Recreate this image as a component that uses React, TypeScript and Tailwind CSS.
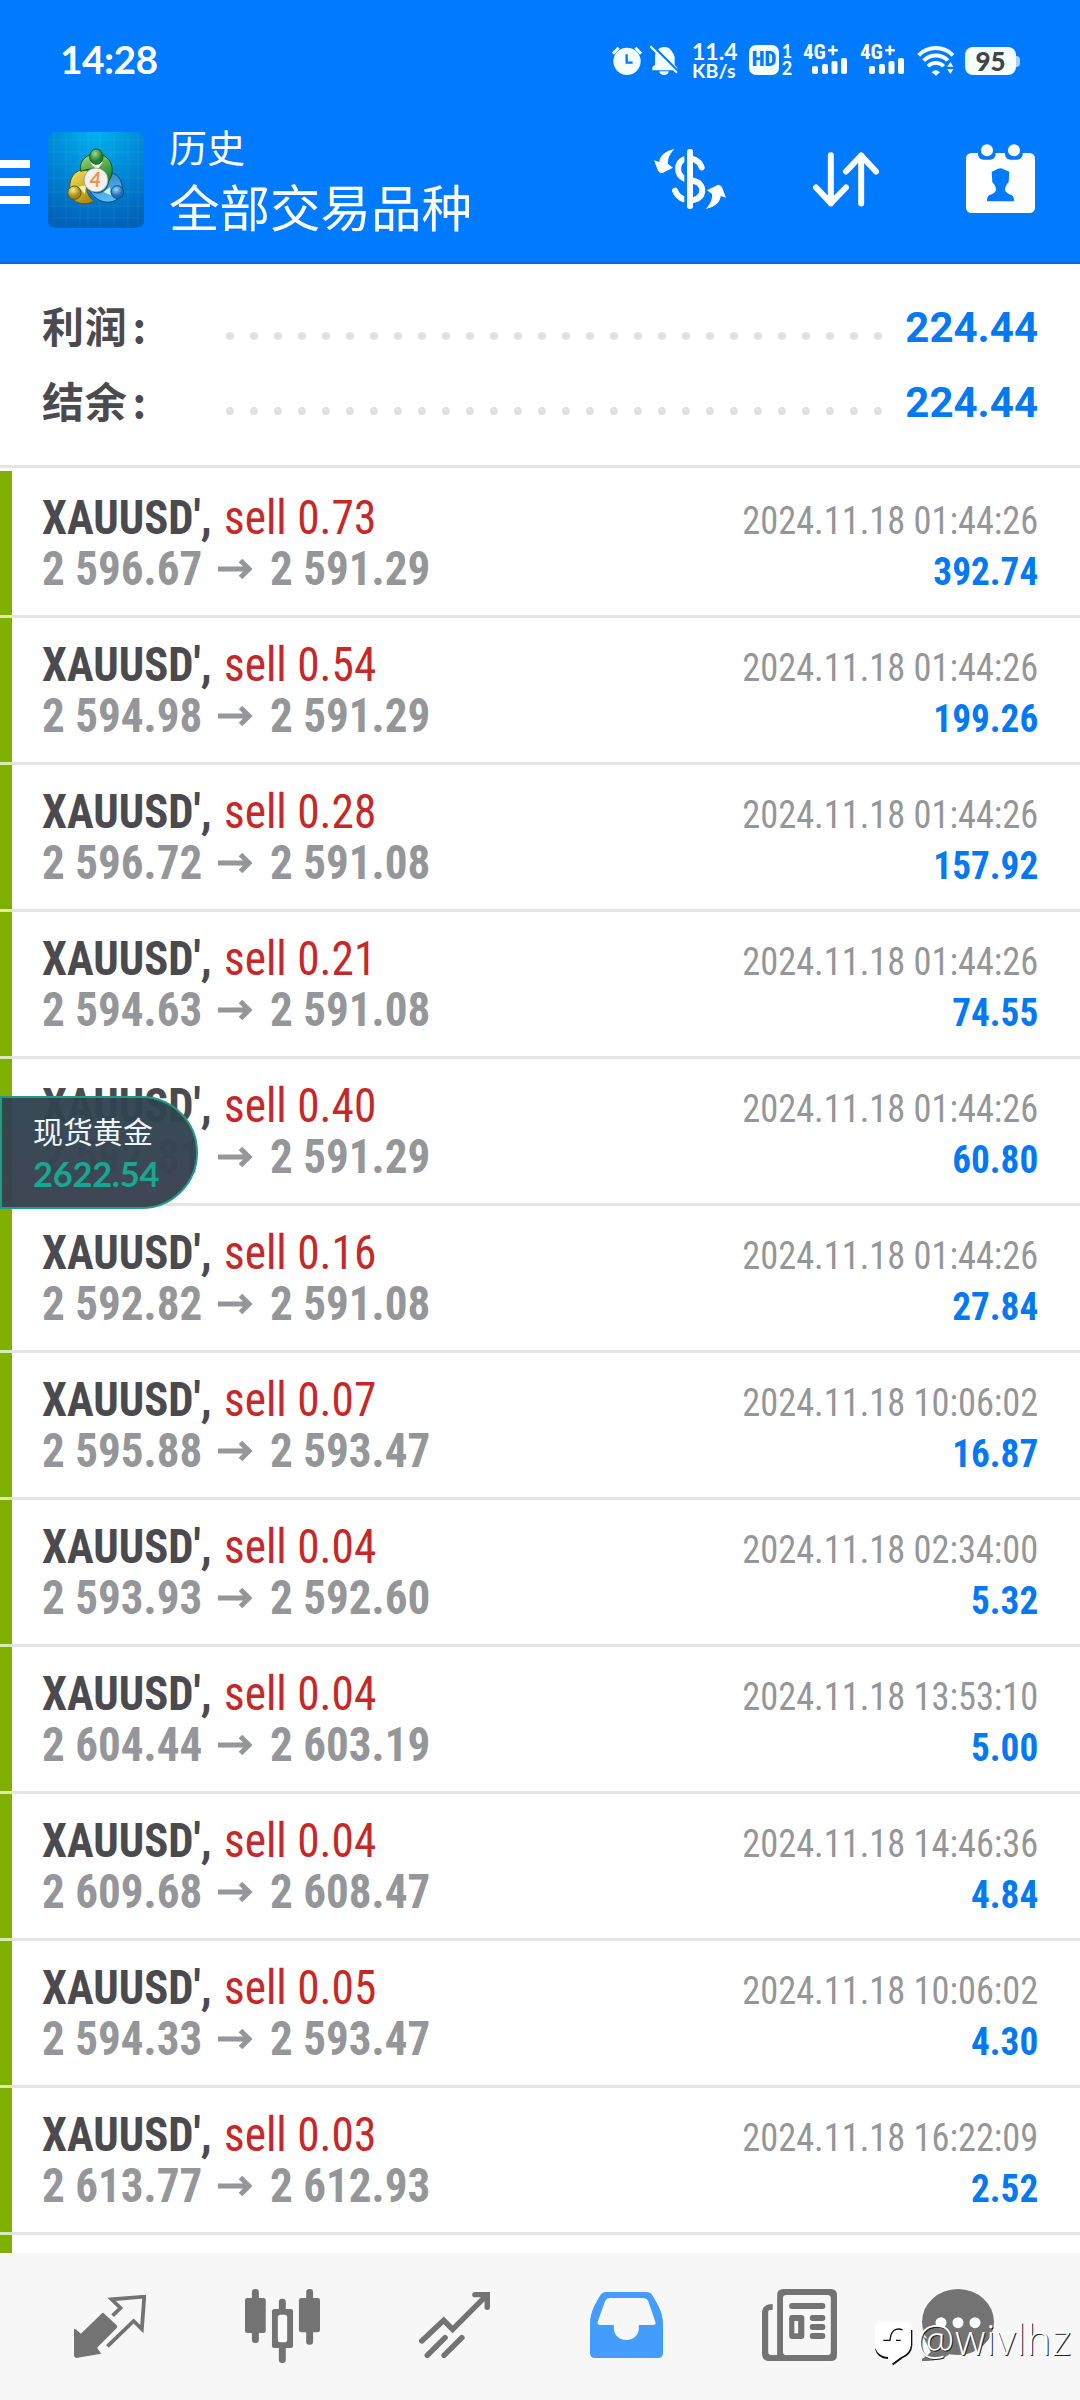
type Deal = { volume: string; open: string; close: string; time: string; profit: string }

const DEALS: Deal[] = [
  { volume: '0.73', open: '2 596.67', close: '2 591.29', time: '2024.11.18 01:44:26', profit: '392.74' },
  { volume: '0.54', open: '2 594.98', close: '2 591.29', time: '2024.11.18 01:44:26', profit: '199.26' },
  { volume: '0.28', open: '2 596.72', close: '2 591.08', time: '2024.11.18 01:44:26', profit: '157.92' },
  { volume: '0.21', open: '2 594.63', close: '2 591.08', time: '2024.11.18 01:44:26', profit: '74.55' },
  { volume: '0.40', open: '2 592.81', close: '2 591.29', time: '2024.11.18 01:44:26', profit: '60.80' },
  { volume: '0.16', open: '2 592.82', close: '2 591.08', time: '2024.11.18 01:44:26', profit: '27.84' },
  { volume: '0.07', open: '2 595.88', close: '2 593.47', time: '2024.11.18 10:06:02', profit: '16.87' },
  { volume: '0.04', open: '2 593.93', close: '2 592.60', time: '2024.11.18 02:34:00', profit: '5.32' },
  { volume: '0.04', open: '2 604.44', close: '2 603.19', time: '2024.11.18 13:53:10', profit: '5.00' },
  { volume: '0.04', open: '2 609.68', close: '2 608.47', time: '2024.11.18 14:46:36', profit: '4.84' },
  { volume: '0.05', open: '2 594.33', close: '2 593.47', time: '2024.11.18 10:06:02', profit: '4.30' },
  { volume: '0.03', open: '2 613.77', close: '2 612.93', time: '2024.11.18 16:22:09', profit: '2.52' },
]

const SUMMARY = [
  { label: '利润', value: '224.44' },
  { label: '结余', value: '224.44' },
]

function Signal({ className }: { className: string }) {
  return (
    <div className={`relative h-[31px] w-[45px] ${className}`}>
      <span className="absolute left-0 top-0 font-['Roboto_Condensed',sans-serif] text-[21px] font-bold leading-[16px]">4G</span>
      <svg className="absolute inset-0" width="45" height="31" viewBox="0 0 45 31" fill="#fff">
        <path d="M25 5h3.6V1.4h2.6V5h3.6v2.6h-3.6v3.6h-2.6V7.6H25z" />
        <rect x="9" y="22" width="6" height="8" rx="2" />
        <rect x="19" y="20" width="6" height="10" rx="2" />
        <rect x="28.500" y="17" width="6" height="13" rx="2" />
        <rect x="38" y="14" width="6" height="16" rx="2" />
      </svg>
    </div>
  )
}

function StatusBar() {
  return (
    <div className="flex h-24 items-start pl-[60px] pt-[44px] text-white">
      <span className="mt-[-4px] w-[552px] font-['Lato',sans-serif] text-[39px] font-bold leading-[39px] tracking-[-0.6px]">14:28</span>
      <svg width="30" height="32" viewBox="66 72 90 96" fill="#f4ffff">
        <circle cx="111" cy="124" r="41" />
        <path d="M69 101l17-18M153 101l-17-18" stroke="#f4ffff" strokeWidth="9" />
        <path d="M110 103v25h18" fill="none" stroke="#007aff" strokeWidth="7" />
      </svg>
      <svg className="ml-[8px]" width="28" height="32" viewBox="182 72 84 96" fill="#f4ffff">
        <path d="M189 151v-9l8-8v-26a28 30 0 0 1 54-8q4 4 5 12v22l8 10v7zM210 154h28a14 11 0 0 1-28 0z" />
        <path d="M186 74l84 84" stroke="#007aff" strokeWidth="8" />
        <path d="M183 79l80 79" stroke="#f4ffff" strokeWidth="6" />
      </svg>
      <div className="ml-[14px] mt-[-3px] w-[45px] whitespace-nowrap font-['Lato',sans-serif] font-bold">
        <div className="text-[23px] leading-[21px]">11.4</div>
        <div className="text-[19.500px] leading-[18px] tracking-[0.2px]">KB/s</div>
      </div>
      <div className="ml-[12px] mt-[1px] flex h-[30px] w-[30px] items-center justify-center rounded-[7px] bg-[#f4ffff] font-['Roboto_Condensed',sans-serif] text-[21px] font-black text-[#007aff]">HD</div>
      <div className="ml-[2px] mt-[-1px] w-[12px] text-center font-['Lato',sans-serif] text-[18px] font-bold leading-[17px]">
        <div>1</div>
        <div>2</div>
      </div>
      <Signal className="ml-[10px]" />
      <Signal className="ml-[12px]" />
      <svg className="ml-[12px]" width="38" height="33" viewBox="982 72 114 99" fill="none" stroke="#f4ffff">
        <path d="M987 106a72 72 0 0 1 103 0" strokeWidth="12" />
        <path d="M1002 122a50 50 0 0 1 73 0" strokeWidth="12" />
        <path d="M1015 139a32 32 0 0 1 47 0" strokeWidth="11" />
        <path d="M1026 157q12-12 25 0l-12 10z" fill="#f4ffff" stroke="none" />
        <path d="M1068 170v-44l14-10 14 10v44z" fill="#007aff" stroke="none" />
        <path d="M1073 140l9-14 9 14zM1073 148l9 14 9-14z" fill="#f4ffff" stroke="none" />
      </svg>
      <div className="ml-[10px] mt-[3px] flex items-center">
        <div className="flex h-[28px] w-[51px] items-center justify-center rounded-[8px] bg-[#f4ffff] font-['Lato',sans-serif] text-[26px] font-black leading-none text-[#444]">95</div>
        <div className="h-[11px] w-[4px] rounded-r bg-[#a5d2ff]" />
      </div>
    </div>
  )
}

function AppLogo() {
  return (
    <svg className="ml-[18px] mt-[36px]" width="96" height="96" viewBox="24 24 288 288">
      <defs>
        <radialGradient id="bg" cx=".5" cy="0" r="1">
          <stop offset="0" stopColor="#00b2ee" />
          <stop offset=".55" stopColor="#0084d4" />
          <stop offset="1" stopColor="#0062b8" />
        </radialGradient>
        <linearGradient id="green" x2=".4" y2="1">
          <stop stopColor="#a4dc74" />
          <stop offset="1" stopColor="#1f8434" />
        </linearGradient>
        <linearGradient id="yellow" x2=".6" y2="1">
          <stop stopColor="#f7ea62" />
          <stop offset="1" stopColor="#b08a16" />
        </linearGradient>
        <linearGradient id="blue" x2=".3" y2="1">
          <stop stopColor="#2f7fc0" />
          <stop offset="1" stopColor="#58bbf0" />
        </linearGradient>
        <radialGradient id="greenHead" cx=".4" cy=".3"><stop stopColor="#9fdc84" /><stop offset="1" stopColor="#237e33" /></radialGradient>
        <radialGradient id="yellowHead" cx=".4" cy=".3"><stop stopColor="#f8ef90" /><stop offset="1" stopColor="#a98616" /></radialGradient>
        <radialGradient id="blueHead" cx=".4" cy=".3"><stop stopColor="#9ad8fb" /><stop offset="1" stopColor="#1d6cb4" /></radialGradient>
      </defs>
      <rect x="24" y="24" width="288" height="288" rx="22" fill="url(#bg)" />
      <path d="M42 24v288M78 24v288M120 24v288M144 24v288M180 24v288M222 24v288M264 24v288M294 24v288M24 48h288M24 84h288M24 120h288M24 162h288M24 204h288M24 246h288M24 282h288" stroke="#fff" strokeOpacity=".1" strokeWidth="2" />
      <g strokeWidth="3">
        <path d="M91 208C84 170 98 144 124 138C145 134 160 150 148 172C134 190 140 214 162 232C132 248 96 238 91 208Z" fill="url(#yellow)" stroke="#5d560d" />
        <path d="M147 196C170 216 198 206 204 180C208 160 212 152 220 148C246 160 254 192 240 216C220 246 168 240 147 196Z" fill="url(#blue)" stroke="#0d4678" />
        <path d="M122 142C116 108 140 90 170 90C204 90 224 122 214 156C210 168 202 178 200 180C204 152 190 136 168 134C150 134 136 138 122 142Z" fill="url(#green)" stroke="#135326" />
        <path d="M150 116l38-2-16 24z" fill="#f2f7ef" stroke="none" />
        <path d="M116 188l22-4-4 26z" fill="#f5f1b8" stroke="none" />
        <path d="M190 204l20-14 4 24z" fill="#d8efff" stroke="none" />
        <ellipse cx="169" cy="98" rx="20" ry="23" fill="url(#greenHead)" stroke="#155a28" />
        <circle cx="103" cy="206" r="20" fill="url(#yellowHead)" stroke="#5f560f" />
        <circle cx="232" cy="204" r="19" fill="url(#blueHead)" stroke="#124d85" />
      </g>
      <circle cx="168" cy="168" r="36" fill="#f2f0f0" stroke="#8a8466" strokeWidth="2" />
      <text x="166" y="188" textAnchor="middle" fontFamily="Lato, sans-serif" fontWeight="700" fontStyle="italic" fontSize="60" fill="#ee9448">4</text>
    </svg>
  )
}

function ExchangeIcon() {
  const curl = 'M223 120C206 138 203 152 204 165L219 176L186 193Q178 192 174 185L162 154L178 159Q180 130 223 120Z'
  return (
    <svg width="72" height="60" viewBox="162 120 216 180" fill="#fff">
      <path d={curl} />
      <path d={curl} transform="rotate(180 270 210)" />
      <path d="M305 175C298 154 274 143 254 150C228 160 228 198 254 209C268 214 284 213 296 222C314 238 308 262 290 270C266 280 236 272 225 245" fill="none" stroke="#fff" strokeWidth="18" strokeLinecap="round" />
      <rect x="253" y="120" width="12" height="180" fill="#007aff" />
      <rect x="261" y="120" width="18" height="180" rx="8" />
    </svg>
  )
}

function SortIcon() {
  return (
    <svg width="66" height="55" viewBox="639 128 198 164" fill="none" stroke="#fff" strokeWidth="18" strokeLinecap="round" strokeLinejoin="round">
      <path d="M692.500 137V282M648 234L692.500 281L738 234M783.500 282V138M738 186L783.500 138L828 186" />
    </svg>
  )
}

function CalendarIcon() {
  return (
    <svg width="69" height="69" viewBox="1098 101 207 207" fill="#fff">
      <rect x="1098" y="128" width="207" height="180" rx="16" />
      <path d="M1134 122h53v12q-4 14-16 14h-21q-13 0-16-14zM1215 122h53v12q-4 14-16 14h-21q-13 0-16-14z" fill="#007aff" />
      <circle cx="1161" cy="120" r="18" />
      <circle cx="1242" cy="120" r="18" />
      <path d="M1175 184l12-5q15-10 28 0l13 5-2 32q-11 10-11 24 4 10 20 14 7 4 7 19h-81q0-15 7-19 17-4 20-14 0-14-11-24z" fill="#007aff" />
    </svg>
  )
}

function Header() {
  return (
    <div className="flex h-[168px] items-start border-b-2 border-[#1268c8] text-white">
      <div className="mt-[64px] flex w-[30px] flex-col gap-[10px]">
        <div className="h-2 bg-white" />
        <div className="h-2 bg-white" />
        <div className="h-2 bg-white" />
      </div>
      <AppLogo />
      <div className="ml-[25px] mt-[29px] w-[443px] font-['Roboto','Noto_Sans_CJK_SC',sans-serif]">
        <div className="text-[38px] leading-[49px]">历史</div>
        <div className="text-[50.500px] leading-[72px]">全部交易品种</div>
      </div>
      <div className="flex h-[166px] w-[156px] items-center justify-center"><ExchangeIcon /></div>
      <div className="flex h-[166px] w-[156px] items-center justify-center"><SortIcon /></div>
      <div className="flex h-[165px] w-[152px] items-center justify-center"><CalendarIcon /></div>
    </div>
  )
}

function Summary() {
  return (
    <div className="h-[204px] border-b-[3px] border-[#e4e4e4] px-[42px] pt-[26px]">
      {SUMMARY.map(s => (
        <div key={s.label} className="flex h-[75px] font-['Roboto','Noto_Sans_CJK_SC',sans-serif] text-[42px] font-bold leading-[75px]">
          <span className="mt-px w-[184px] tracking-[0.8px] text-[#4a4a4f]">
            {s.label}
            <span className="ml-[5px] font-['Noto_Sans_CJK_SC',sans-serif] leading-none">:</span>
          </span>
          <div className="mt-[42px] flex w-[656px] justify-between">
            {Array.from({ length: 28 }, (_, i) => <i key={i} className="size-[8px] rounded-full bg-[#e2e2e2]" />)}
          </div>
          <span className="flex-1 text-right text-[#0579f2]">{s.value}</span>
        </div>
      ))}
    </div>
  )
}

function DealRow({ deal }: { deal: Deal }) {
  return (
    <div className="flex h-[147px] flex-col font-['Roboto_Condensed',sans-serif]">
      <div className="flex h-36">
        <div className="w-3 bg-[#7fb000]" />
        <div className="flex flex-1 justify-between pl-[30px] pr-[42px] pt-[21px]">
          <div className="text-[48.500px] leading-[51px]">
            <div className="flex">
              <span className="w-[182px] origin-left scale-x-[0.92] whitespace-nowrap font-bold text-[#4a4a4f]">XAUUSD',</span>
              <span className="origin-left scale-x-[0.935] whitespace-nowrap text-[#c62828]">sell {deal.volume}</span>
            </div>
            <div className="flex font-bold text-[#949699]">
              <span className="w-[176px] origin-left scale-x-[0.93] whitespace-nowrap">{deal.open}</span>
              <svg className="mt-[15px]" width="35" height="22" viewBox="0 0 35 22" fill="none" stroke="#949699" strokeWidth="5">
                <path d="M0 11h31M22.500 2.500L31 11l-8.500 8.500" />
              </svg>
              <span className="ml-[17px] origin-left scale-x-[0.93] whitespace-nowrap">{deal.close}</span>
            </div>
          </div>
          <div className="pt-1 text-right text-[39px] leading-[51px]">
            <div className="origin-right scale-x-[0.933] text-[#949699]">{deal.time}</div>
            <div className="origin-right scale-x-[0.955] font-bold text-[#0579f2]">{deal.profit}</div>
          </div>
        </div>
      </div>
      <div className="flex h-[3px]">
        <div className="w-3 bg-[#d9ebb4]" />
        <div className="flex-1 bg-[#e4e4e4]" />
      </div>
    </div>
  )
}

function PriceBadge() {
  return (
    <div className="absolute left-0 top-[1096px] h-[113px] w-[198px] rounded-r-full border-2 border-[#1f9c84] bg-linear-to-b from-[#2e4450]/96 to-[#3a404f]/97 pl-[31px] pt-[15px]">
      <div className="font-['Roboto','Noto_Sans_CJK_SC',sans-serif] text-[30px] leading-[40px] text-[#eef4f6]">现货黄金</div>
      <div className="font-['Lato',sans-serif] text-[34.500px] font-bold leading-[42px] tracking-[-0.3px] text-[#16a890]">2622.54</div>
    </div>
  )
}

function BottomNav() {
  return (
    <div className="flex h-[147px] items-start bg-[#f7f7f7] pl-6 pt-[36px]">
      <div className="flex w-[172px] justify-center">
        <svg className="mt-[6px]" width="72" height="63" viewBox="215 285 209 189" preserveAspectRatio="none" fill="#737373">
          <path d="M299 338Q303 340 306 344L339 376Q342 380 339 384L282 443L294 461L221 474Q215 473 215 466V386L222 389L235 401L294 342Q297 338 299 338Z" />
          <path d="M327 347L350 324L324 298L419 290L412 387L388 363L312 439" fill="none" stroke="#737373" strokeWidth="11" />
        </svg>
      </div>
      <div className="flex w-[172px] justify-center">
        <svg width="75" height="74" viewBox="709 267 217 222" preserveAspectRatio="none" fill="#737373">
          <rect x="709" y="294" width="60" height="105" rx="7" />
          <rect x="729" y="267" width="20" height="162" rx="9" />
          <rect x="865" y="294" width="61" height="103" rx="7" />
          <rect x="886" y="267" width="20" height="167" rx="9" />
          <rect x="807" y="296" width="20" height="50" rx="9" />
          <rect x="807" y="430" width="20" height="59" rx="9" />
          <rect x="787" y="327" width="61" height="117" rx="7" />
          <rect x="804" y="344" width="27" height="83" rx="8" fill="#fafafa" />
        </svg>
      </div>
      <div className="flex w-[172px] justify-center">
        <svg className="mt-[3px]" width="71" height="66" viewBox="1213 276 207 198" preserveAspectRatio="none" fill="none" stroke="#737373" strokeWidth="16" strokeLinecap="round">
          <path d="M1221 423L1285 361L1311 388L1410 286" strokeLinejoin="miter" />
          <path d="M1376 284H1412V322" />
          <path d="M1237 466L1289 413M1286 466L1338 413" />
        </svg>
      </div>
      <div className="flex w-[173px] justify-center">
        <svg className="mt-[3px]" width="73" height="66" viewBox="146 276 211 198" preserveAspectRatio="none" fill="#449cfc">
          <path d="M193 276H309Q320 276 326 286C344 316 357 340 357 372V459Q357 474 342 474H161Q146 474 146 459V372C146 340 160 312 176 286Q182 276 193 276Z" />
          <path d="M204 294H300Q310 294 314 302L335 366Q338 375 328 375H287V386A36 34 0 0 1 215 386V375H176Q166 375 168 366L190 302Q194 294 204 294Z" fill="#f7f7f7" />
        </svg>
      </div>
      <div className="flex w-[173px] justify-center">
        <svg width="75" height="72" viewBox="646 267 218 216" preserveAspectRatio="none" fill="#737373">
          <path d="M677 312V329Q664 328 664 336V456Q664 465 673 465H690V285Q690 267 708 267H846Q864 267 864 285V465Q864 483 846 483H668Q646 483 646 461V336Q648 312 677 312Z" />
          <rect x="707" y="285" width="139" height="180" rx="10" fill="#f7f7f7" />
          <rect x="725" y="309" width="105" height="18" rx="8" />
          <rect x="725" y="345" width="44" height="72" rx="9" />
          <rect x="740" y="363" width="11" height="37" fill="#f7f7f7" />
          <rect x="785" y="345" width="45" height="18" rx="8" />
          <rect x="785" y="372" width="45" height="18" rx="8" />
          <rect x="785" y="399" width="45" height="18" rx="8" />
        </svg>
      </div>
      <div className="flex w-[144px] justify-center">
        <svg width="72" height="72" viewBox="246 57 216 216" fill="#737373">
          <ellipse cx="354" cy="156" rx="108" ry="99" />
          <path d="M250 200l22 46q-10 14-26 20v7q60 2 90-26z" />
          <circle cx="303" cy="158" r="16.500" fill="#fff" />
          <circle cx="354" cy="158" r="16.500" fill="#fff" />
          <circle cx="405" cy="158" r="16.500" fill="#fff" />
        </svg>
      </div>
    </div>
  )
}

function Watermark() {
  return (
    <div className="absolute left-[874px] top-[2318px] flex">
      <svg width="40" height="48" viewBox="102 144 120 144">
        <path d="M214 180V226Q212 252 186 262L158 283" fill="none" stroke="#111" strokeWidth="6" />
        <path d="M108 236Q114 262 144 264" fill="none" stroke="#111" strokeWidth="6" />
        <path d="M128 154H190Q213 154 213 178V224Q210 250 184 260L156 280L150 262Q108 258 105 228V178Q105 154 128 154Z" fill="#fff" />
        <path d="M130 211h20q2-27 18-33 10-3 20 2M168 211h14" fill="none" stroke="#111" strokeWidth="4" />
      </svg>
      <span className="ml-[3px] mt-[-1px] font-['Open_Sans',sans-serif] text-[42px] font-light leading-[44px] tracking-[0.7px] text-white [text-shadow:1px_1px_0_#222]">@wivlhz</span>
    </div>
  )
}

export default function App() {
  return (
    <div className="relative flex h-[2400px] w-[1080px] flex-col overflow-hidden bg-white">
      <div className="shrink-0 bg-[#007aff]">
        <StatusBar />
        <Header />
      </div>
      <Summary />
      <div className="h-[1785px] shrink-0 overflow-hidden pt-[3px]">
        {DEALS.map((d, i) => <DealRow key={i} deal={d} />)}
        <div className="h-[18px] w-3 bg-[#7fb000]" />
      </div>
      <BottomNav />
      <PriceBadge />
      <Watermark />
    </div>
  )
}
